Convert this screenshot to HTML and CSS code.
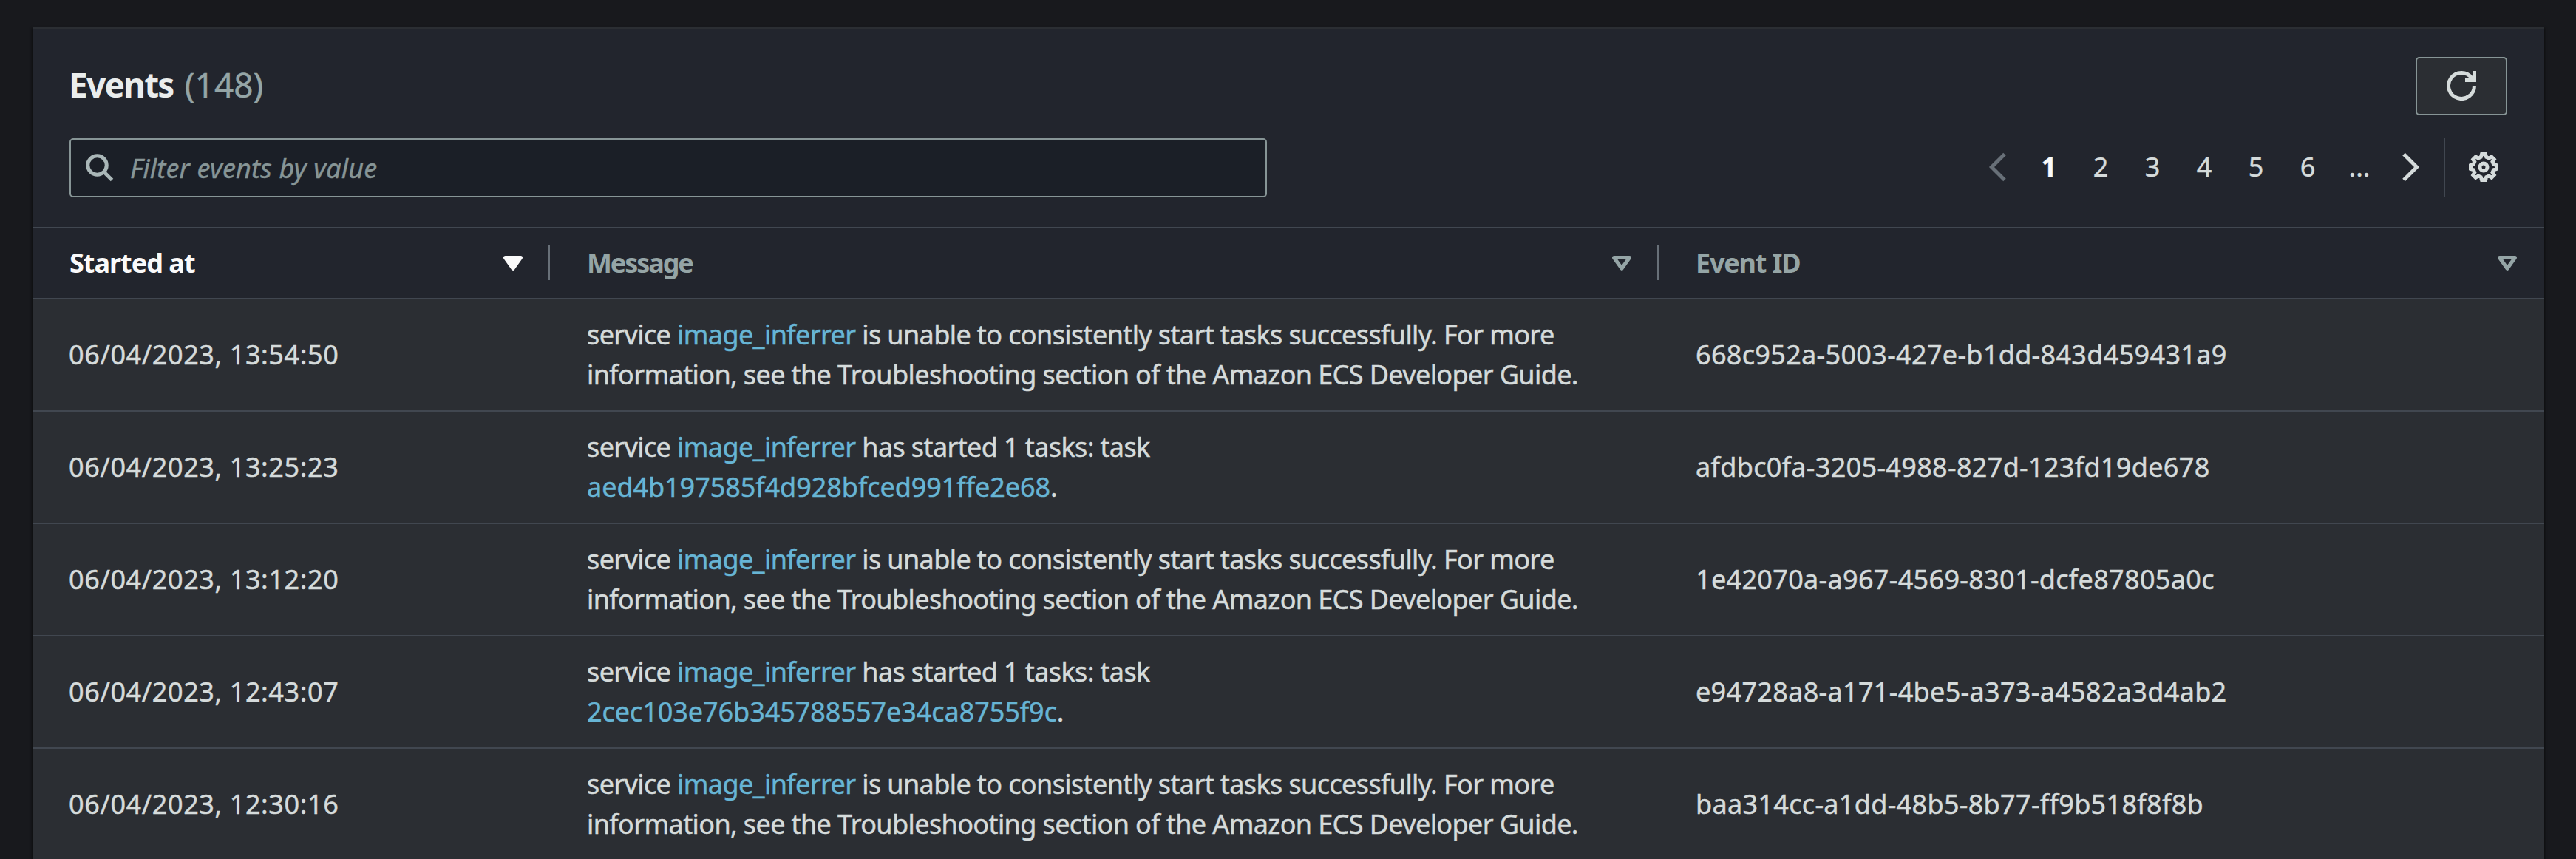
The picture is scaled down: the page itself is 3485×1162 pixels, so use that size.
FILE: index.html
```html
<!DOCTYPE html>
<html lang="en">
<head>
<meta charset="utf-8">
<title>Events</title>
<link rel="stylesheet" href="styles.css">
</head>
<body>
<div class="previous-panel"></div>
<main class="panel">
  <header class="panel-header">
    <div class="title-row">
      <h2 class="title">Events <span class="count">(148)</span></h2>
      <button class="refresh" aria-label="Refresh">
        <svg class="icon" viewBox="0 0 16 16"><path d="M15 8A7 7 0 1 1 13.6 3.8L14.6 5M10 5h5V0"/></svg>
      </button>
    </div>
    <div class="tools-row">
      <label class="filter">
        <svg class="icon" viewBox="0 0 16 16"><circle cx="7" cy="7" r="5.1"/><path d="M10.6 10.6L15 15"/></svg>
        <span class="placeholder">Filter events by value</span>
      </label>
      <nav class="pagination">
        <span class="page disabled"><svg class="icon" viewBox="0 0 16 16"><path d="M12 1L5 8l7 7"/></svg></span>
        <span class="page current">1</span>
        <span class="page">2</span>
        <span class="page">3</span>
        <span class="page">4</span>
        <span class="page">5</span>
        <span class="page">6</span>
        <span class="page">...</span>
        <span class="page"><svg class="icon" viewBox="0 0 16 16"><path d="M4 1l7 7-7 7"/></svg></span>
      </nav>
      <div class="settings">
        <svg class="icon" viewBox="0 0 16 16"><path d="M7 1h2l.5 1.6 1.4.6 1.4-.8 1.4 1.4-.9 1.3.6 1.4L15 7v2l-1.6.5-.6 1.4.9 1.4-1.4 1.4-1.4-.9-1.4.6L9 15H7l-.5-1.6-1.4-.6-1.4.9-1.4-1.4.8-1.4-.6-1.4L1 9V7l1.5-.5.6-1.4-.8-1.3 1.4-1.4 1.4.8 1.4-.6z"/><circle cx="8" cy="8" r="2"/></svg>
      </div>
    </div>
  </header>

  <div class="row head">
    <div class="th sorted"><span>Started at</span><svg class="caret" viewBox="0 0 26 20"><path d="M2.5 2.5h21L13 17.3z"/></svg><i class="divider"></i></div>
    <div class="th tight"><span>Message</span><svg class="caret" viewBox="0 0 26 20"><path d="M2.5 2.5h21L13 17.3z"/></svg><i class="divider"></i></div>
    <div class="th"><span>Event ID</span><svg class="caret" viewBox="0 0 26 20"><path d="M2.5 2.5h21L13 17.3z"/></svg></div>
  </div>

  <div class="row">
    <div class="cell date">06/04/2023, 13:54:50</div>
    <div class="cell message">service <a>image_inferrer</a> is unable to consistently start tasks successfully. For more<br>information, see the Troubleshooting section of the Amazon ECS Developer Guide.</div>
    <div class="cell id">668c952a-5003-427e-b1dd-843d459431a9</div>
  </div>
  <div class="row">
    <div class="cell date">06/04/2023, 13:25:23</div>
    <div class="cell message">service <a>image_inferrer</a> has started 1 tasks: task<br><span class="task"><a>aed4b197585f4d928bfced991ffe2e68</a>.</span></div>
    <div class="cell id">afdbc0fa-3205-4988-827d-123fd19de678</div>
  </div>
  <div class="row">
    <div class="cell date">06/04/2023, 13:12:20</div>
    <div class="cell message">service <a>image_inferrer</a> is unable to consistently start tasks successfully. For more<br>information, see the Troubleshooting section of the Amazon ECS Developer Guide.</div>
    <div class="cell id">1e42070a-a967-4569-8301-dcfe87805a0c</div>
  </div>
  <div class="row">
    <div class="cell date">06/04/2023, 12:43:07</div>
    <div class="cell message">service <a>image_inferrer</a> has started 1 tasks: task<br><span class="task"><a>2cec103e76b345788557e34ca8755f9c</a>.</span></div>
    <div class="cell id">e94728a8-a171-4be5-a373-a4582a3d4ab2</div>
  </div>
  <div class="row">
    <div class="cell date">06/04/2023, 12:30:16</div>
    <div class="cell message">service <a>image_inferrer</a> is unable to consistently start tasks successfully. For more<br>information, see the Troubleshooting section of the Amazon ECS Developer Guide.</div>
    <div class="cell id">baa314cc-a1dd-48b5-8b77-ff9b518f8f8b</div>
  </div>
</main>
</body>
</html>
```
FILE: styles.css
```css
* { box-sizing: border-box; }

body {
  margin: 0;
  height: 1162px;
  overflow: hidden;
  background: #18191d;
  color: #d5dbdb;
  font: 36px/54px "Noto Sans", "Open Sans", sans-serif;
}

.previous-panel {
  height: 0;
  margin: 0 43px 0 44px;
  box-shadow: 0 1px 2px 0 rgba(0, 0, 0, .45);
}

.panel {
  margin: 37px 43px 0 44px;
  background: #2b2e33;
  border-top: 2px solid #2b2e33;
  box-shadow: 0 2px 3px 1px rgba(0, 0, 0, .5);
}

.panel-header {
  height: 268px;
  padding: 38px 50px 0 50px;
  background: #22252d;
}

.title-row,
.tools-row {
  display: flex;
  align-items: center;
}

.title-row {
  height: 79px;
  justify-content: space-between;
}

.title {
  margin: 0 0 6px -1px;
  font-size: 46px;
  font-weight: 700;
  line-height: 60px;
  letter-spacing: -1.8px;
  color: #eaeded;
}

.count {
  margin-left: 5px;
  font-weight: 400;
  letter-spacing: 0;
  color: #95a5a6;
  -webkit-text-stroke: .4px currentColor;
}

.refresh {
  display: flex;
  align-items: center;
  justify-content: center;
  width: 124px;
  height: 79px;
  padding: 0 0 1px;
  background: #2b2e33;
  border: 2px solid #879596;
  border-radius: 5px;
  color: #d5dbdb;
}

.icon {
  flex: none;
  display: block;
  width: 40px;
  height: 40px;
  fill: none;
  stroke: currentColor;
  stroke-width: 2;
}

.tools-row {
  height: 80px;
  margin-top: 31px;
}

.filter {
  display: flex;
  align-items: center;
  width: 1620px;
  height: 80px;
  margin-right: auto;
  padding: 0 18px 2px;
  gap: 22px;
  background: #1b1f27;
  border: 2px solid #879596;
  border-radius: 5px;
  color: #aab7b8;
}

.placeholder {
  padding-top: 3px;
  font-style: italic;
  letter-spacing: .17px;
  color: #879596;
  -webkit-text-stroke: .4px currentColor;
}

.pagination {
  display: flex;
  margin-right: 9px;
}

.page {
  display: flex;
  align-items: center;
  justify-content: center;
  width: 70px;
  height: 54px;
  padding-bottom: 2px;
  -webkit-text-stroke: .4px currentColor;
}

.page.disabled { color: #687078; }

.page.current {
  font-weight: 700;
  color: #fafafa;
}

.settings {
  display: flex;
  align-items: center;
  height: 80px;
  padding: 0 12px 2px 32px;
  border-left: 2px solid #414750;
}

.row {
  display: grid;
  grid-template-columns: 700px 1500px 1fr;
  height: 152px;
  border-bottom: 2px solid #414750;
}

.row.head {
  height: 98px;
  border-top: 2px solid #414750;
  background: #22252d;
  font-weight: 700;
  color: #95a5a6;
}

.th {
  display: flex;
  align-items: center;
  padding: 0 0 1px 50px;
  letter-spacing: -1.2px;
}

.th.sorted {
  letter-spacing: -1px;
  color: #fafafa;
}

.th.tight { letter-spacing: -2.1px; }

.th:last-child { padding-right: 37px; }

.caret {
  width: 26px;
  height: 20px;
  margin-left: auto;
  fill: none;
  stroke: currentColor;
  stroke-width: 5;
  stroke-linejoin: round;
}

.sorted .caret { fill: currentColor; }

.divider {
  width: 2px;
  height: 47px;
  margin-left: 35px;
  background: #687078;
}

.cell {
  align-self: center;
  padding-left: 49px;
  white-space: nowrap;
  -webkit-text-stroke: .5px currentColor;
}

.date { letter-spacing: .6px; }

.message {
  padding-left: 50px;
  letter-spacing: -.61px;
}

.task { letter-spacing: -.06px; }

.id {
  padding-left: 50px;
  letter-spacing: .32px;
}

a { color: #67b5d5; }
```
